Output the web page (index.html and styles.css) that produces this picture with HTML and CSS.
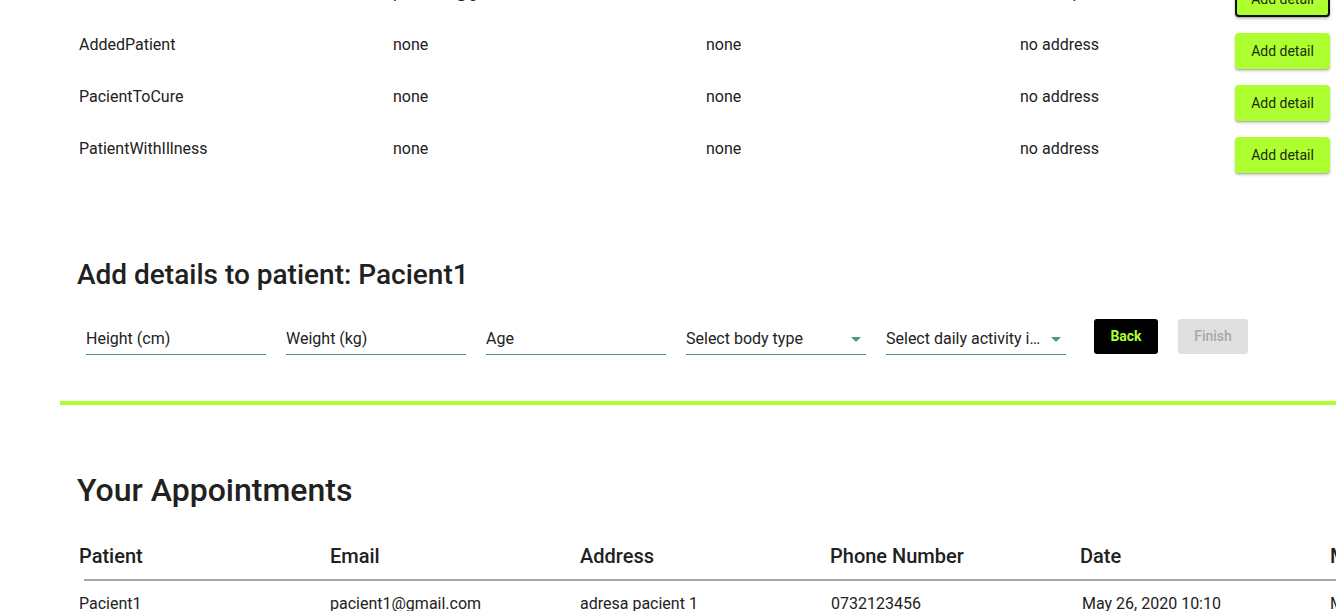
FILE: index.html
```html
<!DOCTYPE html>
<html>
<head>
<meta charset="utf-8">
<link rel="stylesheet" href="styles.css">
</head>
<body>
<div class="page">
  <div class="patients">
    <div class="prow">
      <span>Pacient1</span><span>pacient1@gmail.com</span><span>0732123456</span><span>adresa pacient 1</span>
      <button class="add focused">Add detail</button>
    </div>
    <div class="prow">
      <span>AddedPatient</span><span>none</span><span>none</span><span>no address</span>
      <button class="add">Add detail</button>
    </div>
    <div class="prow">
      <span>PacientToCure</span><span>none</span><span>none</span><span>no address</span>
      <button class="add">Add detail</button>
    </div>
    <div class="prow">
      <span>PatientWithIllness</span><span>none</span><span>none</span><span>no address</span>
      <button class="add">Add detail</button>
    </div>
  </div>

  <h2 class="title">Add details to patient: Pacient1</h2>

  <div class="form">
    <div class="field"><span class="ph">Height (cm)</span></div>
    <div class="field"><span class="ph">Weight (kg)</span></div>
    <div class="field"><span class="ph">Age</span></div>
    <div class="field select"><span class="ph">Select body type</span><span class="arrow"></span></div>
    <div class="field select"><span class="ph">Select daily activity intensity</span><span class="arrow"></span></div>
    <button class="back">Back</button>
    <button class="finish">Finish</button>
  </div>

  <div class="divider"></div>

  <h1 class="apt-title">Your Appointments</h1>

  <div class="apt">
    <div class="arow head">
      <span>Patient</span><span>Email</span><span>Address</span><span>Phone Number</span><span>Date</span><span>Medic</span>
    </div>
    <div class="hline"></div>
    <div class="arow data">
      <span>Pacient1</span><span>pacient1@gmail.com</span><span>adresa pacient 1</span><span class="n1">0732123456</span><span class="n2">May 26, 2020 10:10</span><span>Medic1</span>
    </div>
  </div>
</div>
</body>
</html>
```

FILE: styles.css
```css
html, body {
  margin: 0;
  padding: 0;
  background: #ffffff;
  overflow: hidden;
}
body {
  font-family: Roboto, "Liberation Sans", sans-serif;
  color: #212121;
  width: 1336px;
  height: 611px;
}
.page {
  width: 1336px;
}
.patients {
  margin-top: -34px;
}
.prow {
  display: grid;
  grid-template-columns: 314px 313px 314px 215px 95px;
  padding-left: 79px;
  height: 52px;
  align-items: center;
  font-size: 16px;
  line-height: 20px;
  white-space: nowrap;
}
.prow span {
  padding-top: 2px;
}
.prow .add {
  align-self: end;
  margin-bottom: 1px;
}
.add {
  width: 95px;
  height: 36px;
  background: #adff2f;
  border: none;
  border-radius: 4px;
  font-family: Roboto, "Liberation Sans", sans-serif;
  font-size: 14px;
  font-weight: 400;
  color: #1e2a10;
  padding: 0;
  box-shadow: 0 2px 3px rgba(0,0,0,0.22), 0 1px 1px rgba(0,0,0,0.14);
}
.add.focused {
  border: 2px solid #111;
}
.title {
  margin: 85px 0 0 77px;
  font-size: 28px;
  line-height: 32px;
  font-weight: 500;
  color: #212121;
}
.form {
  display: flex;
  align-items: flex-start;
  margin-top: 28px;
  padding-left: 86px;
}
.field {
  width: 180px;
  margin-right: 20px;
  box-sizing: border-box;
  padding-top: 11px;
  padding-bottom: 6px;
  border-bottom: 1px solid #4c9a80;
  font-size: 16px;
  line-height: 18px;
  display: flex;
  align-items: center;
  color: #222;
}
.field .ph {
  flex: 1;
  min-width: 0;
  overflow: hidden;
  white-space: nowrap;
  text-overflow: ellipsis;
}
.field.select .ph {
  padding-right: 8px;
}
.arrow {
  width: 0;
  height: 0;
  border-left: 5px solid transparent;
  border-right: 5px solid transparent;
  border-top: 5px solid #4c9a80;
  margin-right: 5px;
  flex: none;
}
.field:last-of-type {
  margin-right: 0;
}
.back {
  margin-left: 28px;
  width: 64px;
  height: 35px;
  background: #000;
  color: #adff2f;
  border: none;
  border-radius: 3px;
  font-family: Roboto, "Liberation Sans", sans-serif;
  font-size: 14px;
  font-weight: 700;
  padding: 0 0 2px;
}
.finish {
  margin-left: 20px;
  width: 70px;
  height: 35px;
  background: #e0e0e0;
  color: #a8a8a8;
  border: none;
  border-radius: 3px;
  font-family: Roboto, "Liberation Sans", sans-serif;
  font-size: 14px;
  font-weight: 500;
  padding: 0 0 2px;
}
.divider {
  margin: 46px 0 0 60px;
  height: 4px;
  background: #adff2f;
}
.apt-title {
  margin: 66px 0 0 77px;
  font-size: 32px;
  line-height: 38px;
  font-weight: 500;
  color: #212121;
}
.apt {
  margin-top: 35px;
}
.arow {
  display: grid;
  grid-template-columns: 251px 250px 250px 250px 250px 250px;
  padding-left: 79px;
  white-space: nowrap;
}
.arow.head {
  font-size: 20px;
  line-height: 24px;
  font-weight: 500;
  color: #212121;
}
.hline {
  margin: 11px 0 0 84px;
  height: 2px;
  background: #a6a6a6;
}
.arow.data {
  margin-top: 11px;
  font-size: 16px;
  line-height: 24px;
  color: #222;
}
.arow.data .n1 {
  padding-left: 1px;
}
.arow.data .n2 {
  padding-left: 2px;
}
```
